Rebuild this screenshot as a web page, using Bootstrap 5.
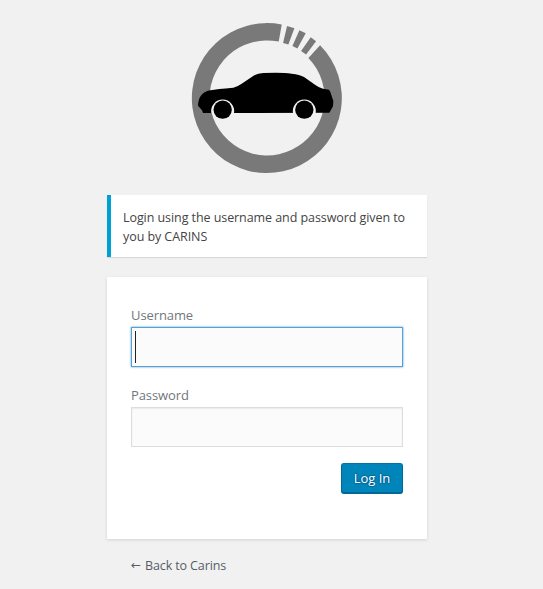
<!DOCTYPE html>
<html lang="en">
<head>
<meta charset="utf-8">
<meta name="viewport" content="width=device-width, initial-scale=1">
<title>Carins – Log In</title>
<link href="https://cdn.jsdelivr.net/npm/bootstrap@5.3.0/dist/css/bootstrap.min.css" rel="stylesheet">
<style>
body{background:#f1f1f1;color:#444;font:13px/19px "Open Sans","Noto Sans",sans-serif;overflow:hidden;padding-right:9px}
.login{width:320px;padding-top:23px}
.logo{width:150px;height:150px;overflow:visible}
.notice{height:62px;margin-top:22px;padding:13px 12px;border-left:4px solid #00a0d2;box-shadow:0 1px 1px rgba(0,0,0,.1);font-size:12.5px;letter-spacing:-.07px}
.notice span{display:block;white-space:nowrap}
.panel{height:262px;margin-top:20px;padding:28px 24px 0;box-shadow:0 1px 3px rgba(0,0,0,.13)}
.form-label{font-size:13px;line-height:20px;height:20px;color:#72777c;margin:0 0 2px;letter-spacing:-.1px}
.form-control{height:40px;padding:3px;border-color:#ddd;background:#fbfbfb;box-shadow:inset 0 1px 2px rgba(0,0,0,.07);font-size:24px}
.form-control.active{border-color:#5b9dd9;box-shadow:0 0 2px rgba(30,140,190,.8)}
.caret{width:1px;height:32px;background:#222}
.field{margin-bottom:18px}
.btn-login{width:62px;height:31px;margin-top:-2px;padding:0 0 1px;border:1px solid;border-color:#0073aa #006799 #006799;border-radius:3px;background:#0085ba;box-shadow:inset 0 -1px 0 #006799;color:#fff;font-size:13px;line-height:26px;text-shadow:0 -1px 1px #006799,1px 0 1px #006799,0 1px 1px #006799,-1px 0 1px #006799}
.btn-login:hover{background:#008ec2;color:#fff}
.back{margin:17px 0 0 24px;color:#555d66;font-size:12.5px;letter-spacing:-.12px}
.arrow{width:10px;font-family:"DejaVu Sans",sans-serif;font-size:12px;margin-right:4px}
</style>
</head>
<body>
<main class="login mx-auto d-flex flex-column">
  <svg class="logo mx-auto d-block" viewBox="21 24 450 450" role="img" aria-label="Carins">
    <g fill="#797979" transform="translate(1.200 .8)">
      <path d="M289 28A225 225 0 1 0 404 90L369 128A172.5 172.5 0 1 1 280 79Z"/>
      <path d="M305 32L327 39L309 88L293 83ZM342 45L361 54L336 100L321 92ZM376 66L392 78L362 118L347 107Z"/>
    </g>
    <path d="M54 294L51 286L39 272Q40 253 47 243Q56 230 76 226Q95 222 145 218Q157 215 170 206L208 181Q218 175 235 174Q290 171 320 176Q344 179 357 186L390 209Q402 218 414 221L432 224Q437 230 439 240L445 258L444 274L433 293.500Z"/>
    <path fill="#f1f1f1" d="M79 294A34.500 34.500 0 1 1 147 294ZM324 294A34.500 34.500 0 1 1 392 294Z"/>
    <circle cx="113" cy="284" r="27.500"/><circle cx="358" cy="284" r="27.500"/>
  </svg>
  <div class="notice bg-white"><span>Login using the username and password given to</span><span>you by CARINS</span></div>
  <form class="panel bg-white">
    <div class="field">
      <label class="form-label d-block" for="user">Username</label>
      <div class="form-control active rounded-0 d-flex" id="user" role="textbox" tabindex="0" aria-label="Username"><span class="caret"></span></div>
    </div>
    <div class="field">
      <label class="form-label d-block" for="pass">Password</label>
      <input class="form-control rounded-0" id="pass" type="password">
    </div>
    <div class="d-flex justify-content-end"><button class="btn btn-login" type="button">Log In</button></div>
  </form>
  <a class="back d-flex text-decoration-none" href="#"><span class="arrow">←</span><span>Back to Carins</span></a>
</main>
</body>
</html>
